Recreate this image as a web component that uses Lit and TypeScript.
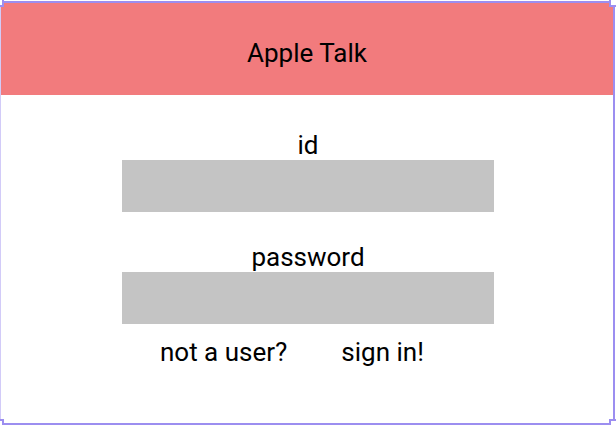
import { LitElement, html, css } from "lit";
import { customElement } from "lit/decorators.js";

@customElement("app-root")
export class AppRoot extends LitElement {
  static styles = css`
    :host {
      display: block;
      box-sizing: border-box;
      min-height: 100vh;
      padding-top: 3px;
      font: 26px/30px Roboto, sans-serif;
      color: #000;
      background: #fff;
      position: relative;
      overflow: hidden;
    }
    .frame {
      position: absolute;
      inset: 1px 1px 0 0;
      border: 2px solid #9c8ef0;
      border-left: 1px solid #d2cbf8;
      pointer-events: none;
    }
    .handle {
      position: absolute;
      width: 8px;
      height: 8px;
      background: #fff;
      border: 2px solid #9c8ef0;
    }
    .tl { top: -8px; left: -9px; }
    .tr { top: -8px; right: -8px; }
    .bl { bottom: -8px; left: -9px; }
    .br { bottom: -8px; right: -8px; }
    header {
      margin-right: 2px;
      padding: 35px 0 27px;
      background: #f27b7d;
      text-align: center;
    }
    h1 { margin: 0; font: inherit; }
    form {
      display: flex;
      flex-direction: column;
      gap: 30px;
      width: 60.4%;
      margin: 0 auto;
      padding-top: 35px;
      text-align: center;
    }
    .field { display: flex; flex-direction: column; }
    input {
      box-sizing: border-box;
      height: 52px;
      border: 0;
      border-radius: 0;
      padding: 0 12px;
      background: #c4c4c4;
      font: inherit;
      outline: none;
    }
    .links {
      display: flex;
      gap: 54px;
      padding: 13px 0 0 38px;
    }
    a, button {
      padding: 0;
      border: 0;
      background: none;
      font: inherit;
      color: inherit;
      text-decoration: none;
      white-space: nowrap;
      cursor: pointer;
    }
  `;

  render() {
    return html`
      <header><h1>Apple Talk</h1></header>
      <form @submit=${(e: Event) => e.preventDefault()}>
        <div class="field">
          <label for="id">id</label>
          <input id="id" type="text" />
        </div>
        <div class="field">
          <label for="password">password</label>
          <input id="password" type="password" />
          <div class="links">
            <a href="#register">not a user?</a>
            <button type="submit">sign in!</button>
          </div>
        </div>
      </form>
      <div class="frame">
        <span class="handle tl"></span><span class="handle tr"></span>
        <span class="handle bl"></span><span class="handle br"></span>
      </div>
    `;
  }
}
